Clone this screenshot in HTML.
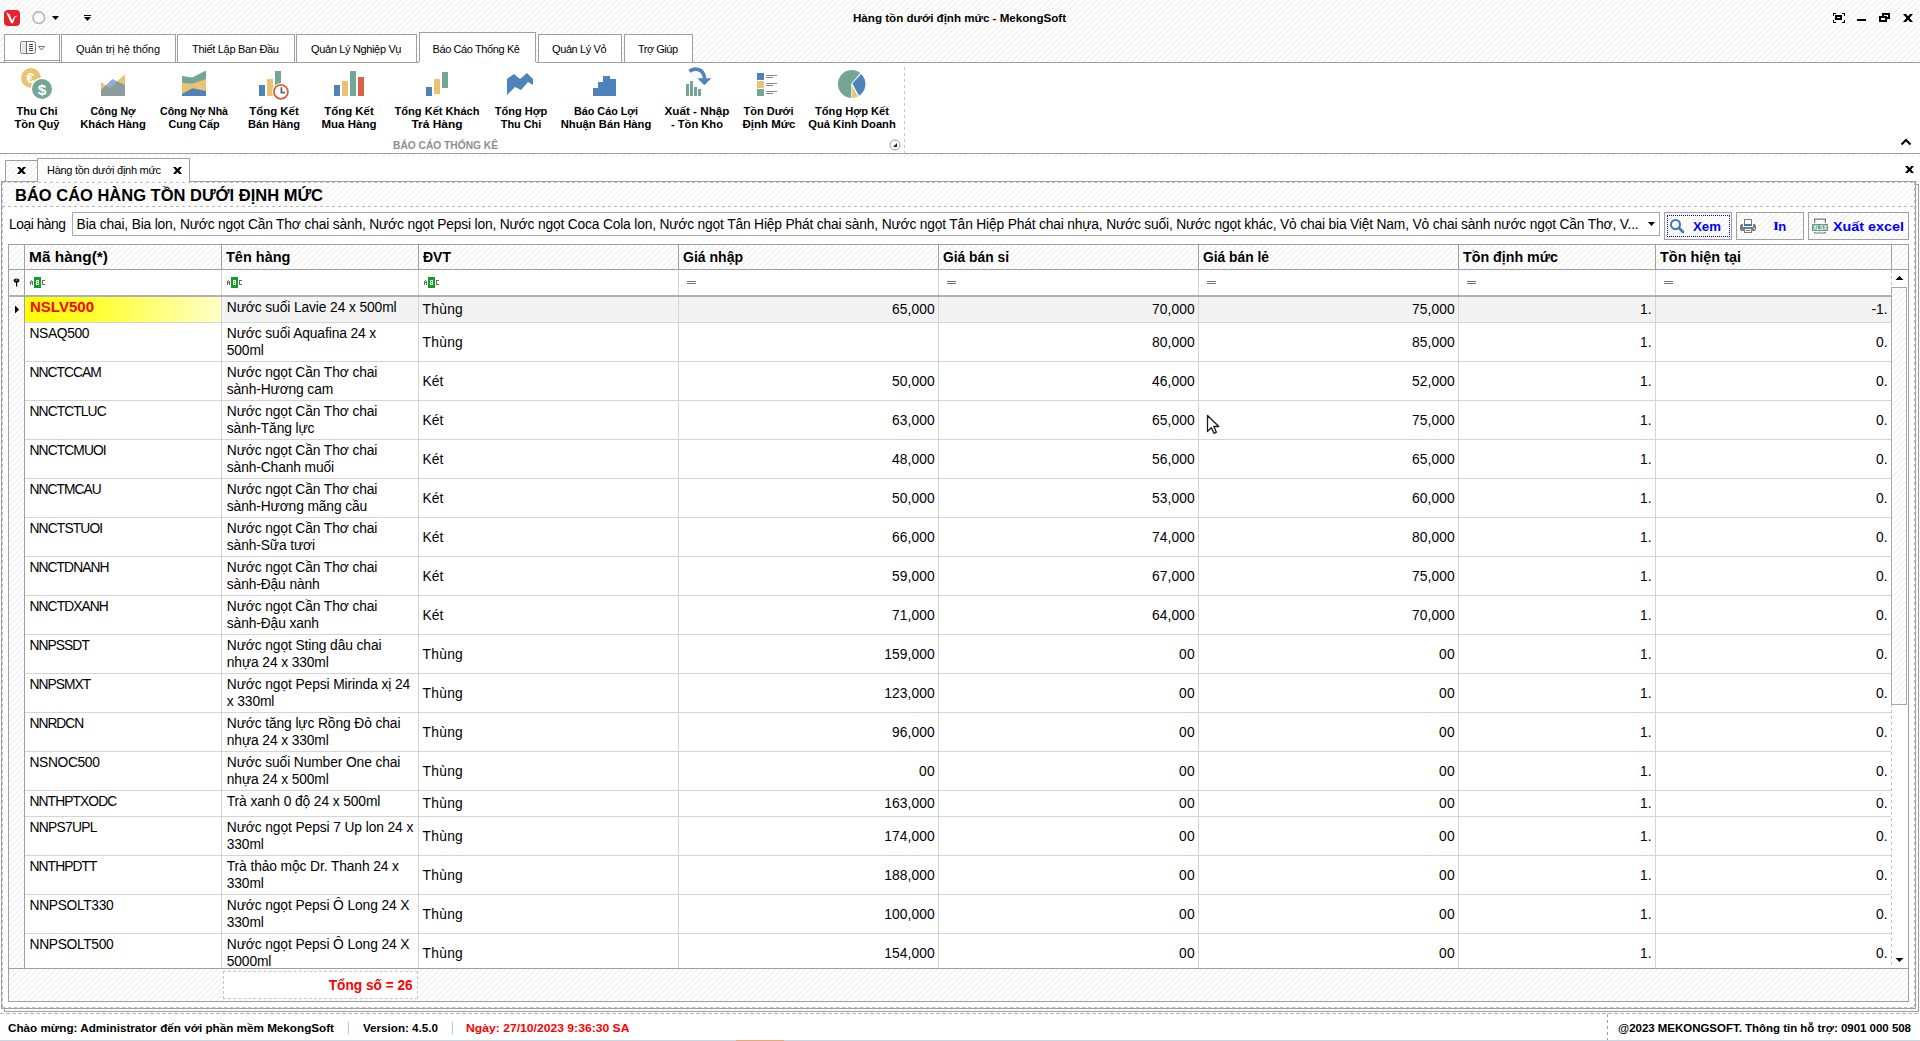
<!DOCTYPE html>
<html><head><meta charset="utf-8"><title>MekongSoft</title>
<style>
html,body{margin:0;padding:0;width:1920px;height:1041px;overflow:hidden;background:#fff;font-family:'Liberation Sans', sans-serif;}
#root{position:relative;width:1920px;height:1041px;overflow:hidden;}
</style></head><body><div id="root">
<svg width="1920" height="1041" style="position:absolute;left:0;top:0" shape-rendering="crispEdges"><defs><pattern id="hp" x="-1" y="0" width="6" height="6" patternUnits="userSpaceOnUse"><rect x="0" y="5" width="1" height="1" fill="#e9e9e9"/><rect x="1" y="4" width="1" height="1" fill="#e9e9e9"/><rect x="2" y="3" width="1" height="1" fill="#e9e9e9"/><rect x="3" y="2" width="1" height="1" fill="#e9e9e9"/><rect x="4" y="1" width="1" height="1" fill="#e9e9e9"/><rect x="5" y="0" width="1" height="1" fill="#e9e9e9"/></pattern><pattern id="hp2" x="-1" y="0" width="6" height="6" patternUnits="userSpaceOnUse"><rect x="0" y="5" width="1" height="1" fill="#f0f0f0"/><rect x="1" y="4" width="1" height="1" fill="#f0f0f0"/><rect x="2" y="3" width="1" height="1" fill="#f0f0f0"/><rect x="3" y="2" width="1" height="1" fill="#f0f0f0"/><rect x="4" y="1" width="1" height="1" fill="#f0f0f0"/><rect x="5" y="0" width="1" height="1" fill="#f0f0f0"/></pattern></defs><rect width="1920" height="1041" fill="url(#hp)"/></svg>
<svg style="position:absolute;left:4px;top:10px" width="16" height="16" viewBox="0 0 16 16"><rect x="0" y="0" width="16" height="16" rx="4" fill="#e8202a"/><path d="M2.2 2.3 L3.8 2.9 L4.2 3.9 L5.2 3.6 L8.2 10.4 L10.2 6.6 L13.6 5.6 L12.4 6.7 L11.3 7.1 L8.9 13.2 L7.1 13.2 Z" fill="#fff"/></svg>
<svg style="position:absolute;left:31px;top:10px" width="16" height="16"><circle cx="7.8" cy="7.7" r="5.8" fill="none" stroke="#b4b4b4" stroke-width="1.6"/></svg>
<svg style="position:absolute;left:51px;top:15px" width="10" height="6"><path d="M1 1 L8 1 L4.5 5 Z" fill="#000"/></svg>
<svg style="position:absolute;left:83px;top:14px" width="10" height="8"><rect x="1" y="1" width="7" height="1" fill="#000"/><path d="M1 3 L8 3 L4.5 7 Z" fill="#000"/></svg>
<span id="t1" style="position:absolute;left:852.5px;transform-origin:0 0;transform:scaleX(1.0535);top:11.19px;font:bold 11px/14px 'Liberation Sans', sans-serif;color:#000;white-space:nowrap;">Hàng tồn dưới định mức - MekongSoft</span>
<svg style="position:absolute;left:1833px;top:13px" width="12" height="10" shape-rendering="crispEdges"><g fill="#000"><rect x="0" y="0" width="3" height="1"/><rect x="0" y="0" width="1" height="3"/><rect x="9" y="0" width="3" height="1"/><rect x="11" y="0" width="1" height="3"/><rect x="0" y="9" width="3" height="1"/><rect x="0" y="7" width="1" height="3"/><rect x="9" y="9" width="3" height="1"/><rect x="11" y="7" width="1" height="3"/></g><path d="M2 2H9V7H2Z M4 4V5H7V4Z" fill="#000" fill-rule="evenodd"/></svg>
<div style="position:absolute;left:1857px;top:19px;width:9px;height:2px;background:#000"></div>
<svg style="position:absolute;left:1879px;top:13px" width="12" height="10" shape-rendering="crispEdges"><path d="M3 0H11V6H3Z M5 2V4H9V2Z" fill="#000" fill-rule="evenodd"/><rect x="0" y="3" width="8" height="6" fill="#000"/><rect x="2" y="5" width="4" height="2" fill="#fff"/></svg>
<svg style="position:absolute;left:1903px;top:14px" width="10" height="8"><path d="M0 0H3L5 2.3L7 0H10L6.6 4L10 8H7L5 5.7L3 8H0L3.4 4Z" fill="#000"/></svg>
<div style="position:absolute;left:0px;top:62px;width:419px;height:1px;background:#a0a0a0"></div>
<div style="position:absolute;left:535px;top:62px;width:1385px;height:1px;background:#a0a0a0"></div>
<div style="position:absolute;left:4px;top:34px;width:56px;height:28px;background:#fff"></div>
<div style="position:absolute;left:4px;top:34px;width:56px;height:1px;background:#a0a0a0"></div>
<div style="position:absolute;left:4px;top:34px;width:1px;height:28px;background:#a0a0a0"></div>
<div style="position:absolute;left:59px;top:34px;width:1px;height:28px;background:#a0a0a0"></div>
<div style="position:absolute;left:4px;top:60px;width:56px;height:1px;background:#a0a0a0"></div>
<svg style="position:absolute;left:20px;top:41px" width="27" height="14"><rect x="0.5" y="0.5" width="15" height="12" rx="2" fill="#fff" stroke="#777"/><rect x="2" y="2" width="4" height="9" fill="#e6e6e6"/><line x1="6.5" y1="0.5" x2="6.5" y2="12.5" stroke="#666"/><rect x="9" y="3" width="4" height="1" fill="#444"/><rect x="9" y="5" width="4" height="1" fill="#444"/><rect x="9" y="7" width="4" height="1" fill="#444"/><rect x="9" y="9" width="4" height="1" fill="#444"/><path d="M18.5 5.5 L24.5 5.5 L21.5 9 Z" fill="none" stroke="#777"/></svg>
<div style="position:absolute;left:61px;top:34px;width:115px;height:28px;background:#fff"></div>
<div style="position:absolute;left:61px;top:34px;width:115px;height:1px;background:#a0a0a0"></div>
<div style="position:absolute;left:61px;top:34px;width:1px;height:28px;background:#a0a0a0"></div>
<div style="position:absolute;left:175px;top:34px;width:1px;height:28px;background:#a0a0a0"></div>
<span id="t2" style="letter-spacing:-0.063px;position:absolute;left:76px;transform-origin:0 0;top:42.19px;font:normal 11px/14px 'Liberation Sans', sans-serif;color:#000;white-space:nowrap;">Quản trị hệ thống</span>
<div style="position:absolute;left:177px;top:34px;width:118px;height:28px;background:#fff"></div>
<div style="position:absolute;left:177px;top:34px;width:118px;height:1px;background:#a0a0a0"></div>
<div style="position:absolute;left:177px;top:34px;width:1px;height:28px;background:#a0a0a0"></div>
<div style="position:absolute;left:294px;top:34px;width:1px;height:28px;background:#a0a0a0"></div>
<span id="t3" style="letter-spacing:-0.296px;position:absolute;left:192px;transform-origin:0 0;top:42.19px;font:normal 11px/14px 'Liberation Sans', sans-serif;color:#000;white-space:nowrap;">Thiết Lập Ban Đầu</span>
<div style="position:absolute;left:296px;top:34px;width:121px;height:28px;background:#fff"></div>
<div style="position:absolute;left:296px;top:34px;width:121px;height:1px;background:#a0a0a0"></div>
<div style="position:absolute;left:296px;top:34px;width:1px;height:28px;background:#a0a0a0"></div>
<div style="position:absolute;left:416px;top:34px;width:1px;height:28px;background:#a0a0a0"></div>
<span id="t4" style="letter-spacing:-0.345px;position:absolute;left:311px;transform-origin:0 0;top:42.19px;font:normal 11px/14px 'Liberation Sans', sans-serif;color:#000;white-space:nowrap;">Quản Lý Nghiệp Vụ</span>
<div style="position:absolute;left:419px;top:32px;width:117px;height:31px;background:#fff"></div>
<div style="position:absolute;left:419px;top:32px;width:117px;height:1px;background:#a0a0a0"></div>
<div style="position:absolute;left:419px;top:32px;width:1px;height:30px;background:#a0a0a0"></div>
<div style="position:absolute;left:535px;top:32px;width:1px;height:30px;background:#a0a0a0"></div>
<span id="t5" style="letter-spacing:-0.392px;position:absolute;left:432.5px;transform-origin:0 0;top:42.19px;font:normal 11px/14px 'Liberation Sans', sans-serif;color:#000;white-space:nowrap;">Báo Cáo Thống Kê</span>
<div style="position:absolute;left:538px;top:34px;width:84px;height:28px;background:#fff"></div>
<div style="position:absolute;left:538px;top:34px;width:84px;height:1px;background:#a0a0a0"></div>
<div style="position:absolute;left:538px;top:34px;width:1px;height:28px;background:#a0a0a0"></div>
<div style="position:absolute;left:621px;top:34px;width:1px;height:28px;background:#a0a0a0"></div>
<span id="t6" style="letter-spacing:-0.399px;position:absolute;left:552px;transform-origin:0 0;top:42.19px;font:normal 11px/14px 'Liberation Sans', sans-serif;color:#000;white-space:nowrap;">Quản Lý Vỏ</span>
<div style="position:absolute;left:624px;top:34px;width:69px;height:28px;background:#fff"></div>
<div style="position:absolute;left:624px;top:34px;width:69px;height:1px;background:#a0a0a0"></div>
<div style="position:absolute;left:624px;top:34px;width:1px;height:28px;background:#a0a0a0"></div>
<div style="position:absolute;left:692px;top:34px;width:1px;height:28px;background:#a0a0a0"></div>
<span id="t7" style="letter-spacing:-0.498px;position:absolute;left:638px;transform-origin:0 0;top:42.19px;font:normal 11px/14px 'Liberation Sans', sans-serif;color:#000;white-space:nowrap;">Trợ Giúp</span>
<div style="position:absolute;left:0px;top:63px;width:1920px;height:90px;background:#fff"></div>
<div style="position:absolute;left:0px;top:153px;width:1920px;height:1px;background:#a0a0a0"></div>
<div style="position:absolute;left:904px;top:67px;width:1px;height:86px;background:repeating-linear-gradient(180deg,#c8c8c8 0 3px,transparent 3px 6px)"></div>
<svg style="position:absolute;left:1900px;top:138px" width="12" height="8"><path d="M1.5 6.5 L6 2 L10.5 6.5" stroke="#000" stroke-width="2" fill="none"/></svg>
<svg style="position:absolute;left:889px;top:139px" width="12" height="12"><circle cx="6" cy="6" r="5" fill="#fff" stroke="#999"/><path d="M4 8 L8 8 L8 4 Z" fill="#222"/></svg>
<span id="t8" style="position:absolute;left:392.5px;transform-origin:0 0;transform:scaleX(0.9287);top:138.19px;font:bold 11px/14px 'Liberation Sans', sans-serif;color:#8e8e8e;white-space:nowrap;">BÁO CÁO THỐNG KÊ</span>
<svg style="position:absolute;left:18px;top:66px" width="36" height="36"><circle cx="13" cy="12" r="10" fill="#ebc370"/><text x="12.3" y="17" font-family="Liberation Sans" font-weight="bold" font-size="14" fill="#fff" text-anchor="middle">€</text><circle cx="24" cy="23" r="11.2" fill="#fff"/><circle cx="24" cy="23" r="10" fill="#73a696"/><text x="24" y="28.5" font-family="Liberation Sans" font-weight="bold" font-size="15.5" fill="#fff" text-anchor="middle">$</text></svg>
<span id="t9" style="position:absolute;left:36.5px;transform-origin:50% 0;transform:translateX(-50%) scaleX(1.0015);top:103.69px;font:bold 11px/14px 'Liberation Sans', sans-serif;color:#000;white-space:nowrap;">Thu Chi</span>
<span id="t10" style="position:absolute;left:36.5px;transform-origin:50% 0;transform:translateX(-50%) scaleX(1.0088);top:116.69px;font:bold 11px/14px 'Liberation Sans', sans-serif;color:#000;white-space:nowrap;">Tồn Quỹ</span>
<svg style="position:absolute;left:101px;top:74px" width="24" height="22"><path d="M0 8 L4.7 11.5 L16.2 7.3 L24 0 L24 22 L0 22 Z" fill="#ebc370"/><path d="M4.7 11.5 L11.3 5 L16.2 7.3 L16.2 22 L4.7 22 Z" fill="#8fb0d4"/><path d="M0 16 L4.7 11.5 L9 14 L16.2 7.3 L24 11 L24 22 L0 22 Z" fill="#8c9c9c"/></svg>
<span id="t11" style="position:absolute;left:113px;transform-origin:50% 0;transform:translateX(-50%) scaleX(0.9590);top:103.69px;font:bold 11px/14px 'Liberation Sans', sans-serif;color:#000;white-space:nowrap;">Công Nợ</span>
<span id="t12" style="position:absolute;left:113px;transform-origin:50% 0;transform:translateX(-50%) scaleX(1.0220);top:116.69px;font:bold 11px/14px 'Liberation Sans', sans-serif;color:#000;white-space:nowrap;">Khách Hàng</span>
<svg style="position:absolute;left:182px;top:70px" width="24" height="26"><path d="M0 6.1 L10.4 7.4 L24 0.4 L24 26 L0 26 Z" fill="#73a696"/><path d="M0 12.8 L10.4 13.8 L24 8.9 L24 26 L0 26 Z" fill="#ebc370"/><path d="M0 24 L10.4 18.2 L24 21 L24 26 L0 26 Z" fill="#4e83ba"/></svg>
<span id="t13" style="position:absolute;left:194px;transform-origin:50% 0;transform:translateX(-50%) scaleX(0.9609);top:103.69px;font:bold 11px/14px 'Liberation Sans', sans-serif;color:#000;white-space:nowrap;">Công Nợ Nhà</span>
<span id="t14" style="position:absolute;left:194px;transform-origin:50% 0;transform:translateX(-50%) scaleX(0.9817);top:116.69px;font:bold 11px/14px 'Liberation Sans', sans-serif;color:#000;white-space:nowrap;">Cung Cấp</span>
<svg style="position:absolute;left:259px;top:71px" width="32" height="32"><rect x="0" y="14" width="6" height="11" fill="#4e83ba"/><rect x="8" y="8" width="6" height="17" fill="#ebc370"/><rect x="16" y="0" width="6" height="16" fill="#73a696"/><circle cx="21.9" cy="20.8" r="8.8" fill="#fff"/><circle cx="21.9" cy="20.8" r="7" fill="#fff" stroke="#d96244" stroke-width="1.8"/><path d="M22.4 16.3 V21.6 H26" stroke="#666" stroke-width="1.8" fill="none"/></svg>
<span id="t15" style="position:absolute;left:273.5px;transform-origin:50% 0;transform:translateX(-50%) scaleX(1.0383);top:103.69px;font:bold 11px/14px 'Liberation Sans', sans-serif;color:#000;white-space:nowrap;">Tổng Kết</span>
<span id="t16" style="position:absolute;left:273.5px;transform-origin:50% 0;transform:translateX(-50%) scaleX(1.0128);top:116.69px;font:bold 11px/14px 'Liberation Sans', sans-serif;color:#000;white-space:nowrap;">Bán Hàng</span>
<svg style="position:absolute;left:334px;top:71px" width="30" height="25"><rect x="0" y="14" width="6" height="11" fill="#4e83ba"/><rect x="8" y="10" width="6" height="15" fill="#ebc370"/><rect x="16" y="0" width="6" height="25" fill="#73a696"/><rect x="24" y="6" width="6" height="19" fill="#d96244"/></svg>
<span id="t17" style="position:absolute;left:349px;transform-origin:50% 0;transform:translateX(-50%) scaleX(1.0383);top:103.69px;font:bold 11px/14px 'Liberation Sans', sans-serif;color:#000;white-space:nowrap;">Tổng Kết</span>
<span id="t18" style="position:absolute;left:349px;transform-origin:50% 0;transform:translateX(-50%) scaleX(1.0464);top:116.69px;font:bold 11px/14px 'Liberation Sans', sans-serif;color:#000;white-space:nowrap;">Mua Hàng</span>
<svg style="position:absolute;left:426px;top:72px" width="22" height="24"><rect x="0" y="15" width="6" height="9" fill="#4e83ba"/><rect x="8" y="7" width="6" height="15" fill="#ebc370"/><rect x="16" y="0" width="6" height="16" fill="#73a696"/></svg>
<span id="t19" style="position:absolute;left:437px;transform-origin:50% 0;transform:translateX(-50%) scaleX(1.0078);top:103.69px;font:bold 11px/14px 'Liberation Sans', sans-serif;color:#000;white-space:nowrap;">Tổng Kết Khách</span>
<span id="t20" style="position:absolute;left:437px;transform-origin:50% 0;transform:translateX(-50%) scaleX(1.0833);top:116.69px;font:bold 11px/14px 'Liberation Sans', sans-serif;color:#000;white-space:nowrap;">Trả Hàng</span>
<svg style="position:absolute;left:507px;top:73px" width="26" height="22"><path d="M0 6 L7 1 L13 6 L20 0 L26 6 L26 12 L21 9 L14 17 L8 14 L0 22 Z" fill="#4e83ba"/></svg>
<span id="t21" style="position:absolute;left:520.5px;transform-origin:50% 0;transform:translateX(-50%) scaleX(1.0015);top:103.69px;font:bold 11px/14px 'Liberation Sans', sans-serif;color:#000;white-space:nowrap;">Tổng Hợp</span>
<span id="t22" style="position:absolute;left:520.5px;transform-origin:50% 0;transform:translateX(-50%) scaleX(0.9893);top:116.69px;font:bold 11px/14px 'Liberation Sans', sans-serif;color:#000;white-space:nowrap;">Thu Chi</span>
<svg style="position:absolute;left:593px;top:76px" width="23" height="20"><path d="M0 12 H5 V6 H10 V0 H17 V3 H23 V20 H0 Z" fill="#4e83ba"/></svg>
<span id="t23" style="position:absolute;left:605.5px;transform-origin:50% 0;transform:translateX(-50%) scaleX(0.9804);top:103.69px;font:bold 11px/14px 'Liberation Sans', sans-serif;color:#000;white-space:nowrap;">Báo Cáo Lợi</span>
<span id="t24" style="position:absolute;left:605.5px;transform-origin:50% 0;transform:translateX(-50%) scaleX(1.0212);top:116.69px;font:bold 11px/14px 'Liberation Sans', sans-serif;color:#000;white-space:nowrap;">Nhuận Bán Hàng</span>
<svg style="position:absolute;left:686px;top:66px" width="27" height="31"><rect x="0" y="18" width="3" height="12" fill="#73a696"/><rect x="4" y="15" width="3" height="15" fill="#73a696"/><rect x="8" y="21" width="3" height="9" fill="#73a696"/><rect x="12" y="23" width="3" height="7" fill="#73a696"/><path d="M3.5 5.3 C7.5 2 17.5 1.5 18.6 12.5" stroke="#4e83ba" stroke-width="3.6" fill="none"/><path d="M11.4 12.2 L25.3 12.2 L18.4 19.2 Z" fill="#4e83ba"/></svg>
<span id="t25" style="position:absolute;left:696.5px;transform-origin:50% 0;transform:translateX(-50%) scaleX(1.0634);top:103.69px;font:bold 11px/14px 'Liberation Sans', sans-serif;color:#000;white-space:nowrap;">Xuất - Nhập</span>
<span id="t26" style="position:absolute;left:696.5px;transform-origin:50% 0;transform:translateX(-50%) scaleX(1.0131);top:116.69px;font:bold 11px/14px 'Liberation Sans', sans-serif;color:#000;white-space:nowrap;">- Tồn Kho</span>
<svg style="position:absolute;left:757px;top:73px" width="22" height="24"><rect x="0" y="0" width="7" height="7" fill="#4e83ba"/><rect x="0" y="8" width="7" height="7" fill="#ebc370"/><rect x="0" y="16" width="7" height="7" fill="#73a696"/><g fill="#888"><rect x="9" y="2" width="11" height="1"/><rect x="9" y="4" width="7" height="1"/><rect x="9" y="10" width="11" height="1"/><rect x="9" y="12" width="7" height="1"/><rect x="9" y="18" width="11" height="1"/><rect x="9" y="20" width="7" height="1"/></g></svg>
<span id="t27" style="position:absolute;left:768.5px;transform-origin:50% 0;transform:translateX(-50%) scaleX(1.0000);top:103.69px;font:bold 11px/14px 'Liberation Sans', sans-serif;color:#000;white-space:nowrap;">Tồn Dưới</span>
<span id="t28" style="position:absolute;left:768.5px;transform-origin:50% 0;transform:translateX(-50%) scaleX(1.0443);top:116.69px;font:bold 11px/14px 'Liberation Sans', sans-serif;color:#000;white-space:nowrap;">Định Mức</span>
<svg style="position:absolute;left:836px;top:69px" width="32" height="32"><path d="M15.3 14.5 L24.4 3.9 A14 14 0 1 0 15.3 29 Z" fill="#73a696"/><path d="M16.3 14.6 L25.2 5 A14 14 0 0 1 23 26.8 Z" fill="#4e83ba"/><path d="M16.2 17 L16.2 29 A14 14 0 0 0 22 27.5 Z" fill="#ebc370"/></svg>
<span id="t29" style="position:absolute;left:851.5px;transform-origin:50% 0;transform:translateX(-50%) scaleX(1.0109);top:103.69px;font:bold 11px/14px 'Liberation Sans', sans-serif;color:#000;white-space:nowrap;">Tổng Hợp Kết</span>
<span id="t30" style="position:absolute;left:851.5px;transform-origin:50% 0;transform:translateX(-50%) scaleX(1.0154);top:116.69px;font:bold 11px/14px 'Liberation Sans', sans-serif;color:#000;white-space:nowrap;">Quả Kinh Doanh</span>
<div style="position:absolute;left:0px;top:157px;width:1920px;height:24px;background:#fff"></div>
<svg style="position:absolute;left:6px;top:161px" width="31" height="20" shape-rendering="crispEdges"><g transform="translate(-6 -161)"><rect x="6" y="161" width="31" height="20" fill="none"/><rect x="6" y="161" width="31" height="20" fill="url(#hp)"/></g></svg>
<div style="position:absolute;left:5px;top:160px;width:32px;height:1px;background:#a0a0a0"></div>
<div style="position:absolute;left:5px;top:160px;width:1px;height:21px;background:#a0a0a0"></div>
<svg style="position:absolute;left:17px;top:167px" width="9" height="7" viewBox="0 0 9 7" preserveAspectRatio="none"><path d="M0 0H2.8L4.5 2.1L6.2 0H9L6.1 3.5L9 7H6.2L4.5 4.9L2.8 7H0L2.9 3.5Z" fill="#000"/></svg>
<div style="position:absolute;left:37px;top:158px;width:153px;height:1px;background:#a0a0a0"></div>
<div style="position:absolute;left:37px;top:158px;width:1px;height:24px;background:#a0a0a0"></div>
<div style="position:absolute;left:189px;top:158px;width:1px;height:24px;background:#a0a0a0"></div>
<span id="t31" style="letter-spacing:-0.275px;position:absolute;left:47px;transform-origin:0 0;top:163.19px;font:normal 11px/14px 'Liberation Sans', sans-serif;color:#000;white-space:nowrap;">Hàng tồn dưới định mức</span>
<svg style="position:absolute;left:173px;top:167px" width="9" height="7" viewBox="0 0 9 7" preserveAspectRatio="none"><path d="M0 0H2.8L4.5 2.1L6.2 0H9L6.1 3.5L9 7H6.2L4.5 4.9L2.8 7H0L2.9 3.5Z" fill="#000"/></svg>
<svg style="position:absolute;left:1905px;top:166px" width="9" height="7" viewBox="0 0 9 7" preserveAspectRatio="none"><path d="M0 0H2.8L4.5 2.1L6.2 0H9L6.1 3.5L9 7H6.2L4.5 4.9L2.8 7H0L2.9 3.5Z" fill="#000"/></svg>
<div style="position:absolute;left:1918px;top:184px;width:1px;height:828px;background:#a0a0a0"></div>
<div style="position:absolute;left:4px;top:1011px;width:1915px;height:1px;background:#a0a0a0"></div>
<div style="position:absolute;left:4px;top:1008px;width:1px;height:4px;background:#a0a0a0"></div>
<div style="position:absolute;left:1915px;top:184px;width:4px;height:1px;background:#a0a0a0"></div>
<div style="position:absolute;left:2px;top:181px;width:35px;height:1px;background:#a0a0a0"></div>
<div style="position:absolute;left:189px;top:181px;width:1727px;height:1px;background:#a0a0a0"></div>
<div style="position:absolute;left:1px;top:181px;width:1px;height:828px;background:#a0a0a0"></div>
<div style="position:absolute;left:1915px;top:181px;width:1px;height:828px;background:#a0a0a0"></div>
<div style="position:absolute;left:1px;top:1008px;width:1915px;height:1px;background:#a0a0a0"></div>
<div style="position:absolute;left:2px;top:182px;width:1px;height:826px;background:repeating-linear-gradient(180deg,#c0c0c0 0 3px,transparent 3px 6px)"></div>
<div style="position:absolute;left:1914px;top:182px;width:1px;height:826px;background:repeating-linear-gradient(180deg,#c0c0c0 0 3px,transparent 3px 6px)"></div>
<div style="position:absolute;left:2px;top:182px;width:1912px;height:1px;background:repeating-linear-gradient(90deg,#c0c0c0 0 3px,transparent 3px 6px)"></div>
<div style="position:absolute;left:2px;top:1007px;width:1912px;height:1px;background:repeating-linear-gradient(90deg,#c0c0c0 0 3px,transparent 3px 6px)"></div>
<div style="position:absolute;left:3px;top:207px;width:1911px;height:800px;background:#fff"></div>
<svg style="position:absolute;left:3px;top:183px" width="1911" height="23" shape-rendering="crispEdges"><g transform="translate(-3 -183)"><rect x="3" y="183" width="1911" height="23" fill="#fff"/><rect x="3" y="183" width="1911" height="23" fill="url(#hp2)"/></g></svg>
<div style="position:absolute;left:2px;top:206px;width:1912px;height:1px;background:repeating-linear-gradient(90deg,#b8b8b8 0 3px,transparent 3px 6px)"></div>
<span id="t32" style="position:absolute;left:14.6px;transform-origin:0 0;transform:scaleX(1.0306);top:185.86px;font:bold 16px/20px 'Liberation Sans', sans-serif;color:#000;white-space:nowrap;">BÁO CÁO HÀNG TỒN DƯỚI ĐỊNH MỨC</span>
<span id="t33" style="letter-spacing:-0.453px;position:absolute;left:9px;transform-origin:0 0;top:216.32px;font:normal 13.8px/17px 'Liberation Sans', sans-serif;color:#000;white-space:nowrap;">Loại hàng</span>
<div style="position:absolute;left:72px;top:212px;width:1588px;height:24px;background:#fff;border:1px solid #a8a8a8;box-sizing:border-box"></div>
<span id="t34" style="letter-spacing:-0.171px;position:absolute;left:76.6px;transform-origin:0 0;top:216.32px;font:normal 13.8px/17px 'Liberation Sans', sans-serif;color:#000;white-space:nowrap;">Bia chai, Bia lon, Nước ngọt Cần Thơ chai sành, Nước ngọt Pepsi lon, Nước ngọt Coca Cola lon, Nước ngọt Tân Hiệp Phát chai sành, Nước ngọt Tân Hiệp Phát chai nhựa, Nước suối, Nước ngọt khác, Vỏ chai bia Việt Nam, Vỏ chai sành nước ngọt Cần Thơ, V...</span>
<svg style="position:absolute;left:1647px;top:221px" width="10" height="6"><path d="M1 1 L8 1 L4.5 5 Z" fill="#000"/></svg>
<div style="position:absolute;left:1664px;top:212px;width:68px;height:28px;background:transparent"></div>
<div style="position:absolute;left:1664px;top:212px;width:68px;height:1px;background:#a0a0a0"></div>
<div style="position:absolute;left:1664px;top:239px;width:68px;height:1px;background:#a0a0a0"></div>
<div style="position:absolute;left:1664px;top:212px;width:1px;height:28px;background:#a0a0a0"></div>
<div style="position:absolute;left:1731px;top:212px;width:1px;height:28px;background:#a0a0a0"></div>
<div style="position:absolute;left:1736px;top:212px;width:68px;height:28px;background:transparent"></div>
<div style="position:absolute;left:1736px;top:212px;width:68px;height:1px;background:#a0a0a0"></div>
<div style="position:absolute;left:1736px;top:239px;width:68px;height:1px;background:#a0a0a0"></div>
<div style="position:absolute;left:1736px;top:212px;width:1px;height:28px;background:#a0a0a0"></div>
<div style="position:absolute;left:1803px;top:212px;width:1px;height:28px;background:#a0a0a0"></div>
<div style="position:absolute;left:1808px;top:212px;width:101px;height:28px;background:transparent"></div>
<div style="position:absolute;left:1808px;top:212px;width:101px;height:1px;background:#a0a0a0"></div>
<div style="position:absolute;left:1808px;top:239px;width:101px;height:1px;background:#a0a0a0"></div>
<div style="position:absolute;left:1808px;top:212px;width:1px;height:28px;background:#a0a0a0"></div>
<div style="position:absolute;left:1908px;top:212px;width:1px;height:28px;background:#a0a0a0"></div>
<svg style="position:absolute;left:1665px;top:213px" width="66" height="26" shape-rendering="crispEdges"><g transform="translate(-1665 -213)"><rect x="1665" y="213" width="66" height="26" fill="none"/><rect x="1665" y="213" width="66" height="26" fill="url(#hp)"/></g></svg>
<svg style="position:absolute;left:1737px;top:213px" width="66" height="26" shape-rendering="crispEdges"><g transform="translate(-1737 -213)"><rect x="1737" y="213" width="66" height="26" fill="none"/><rect x="1737" y="213" width="66" height="26" fill="url(#hp)"/></g></svg>
<svg style="position:absolute;left:1809px;top:213px" width="99" height="26" shape-rendering="crispEdges"><g transform="translate(-1809 -213)"><rect x="1809" y="213" width="99" height="26" fill="none"/><rect x="1809" y="213" width="99" height="26" fill="url(#hp)"/></g></svg>
<div style="position:absolute;left:1667px;top:215px;width:63px;height:22px;border:1px dotted #0000ff;box-sizing:border-box"></div>
<svg style="position:absolute;left:1669px;top:218px" width="16" height="16"><circle cx="6.5" cy="6.5" r="4.5" fill="none" stroke="#3c78b4" stroke-width="2"/><path d="M10 10 L14 14" stroke="#3c78b4" stroke-width="2.6" stroke-linecap="round"/></svg>
<span id="t35" style="position:absolute;left:1693px;transform-origin:0 0;transform:scaleX(1.0193);top:218.50px;font:bold 13px/16px 'Liberation Sans', sans-serif;color:#0000ff;white-space:nowrap;">Xem</span>
<svg style="position:absolute;left:1740px;top:219px" width="16" height="14"><path d="M2 5 H14 A2 2 0 0 1 16 7 V10 A2 2 0 0 1 14 12 H2 A2 2 0 0 1 0 10 V7 A2 2 0 0 1 2 5Z" fill="#7a7a7a"/><rect x="3" y="5" width="10" height="3" fill="#fff"/><rect x="4.5" y="0.5" width="7" height="6" fill="#fff" stroke="#7a7a7a"/><rect x="4" y="5" width="8" height="2" fill="#3c78b4"/><rect x="4.5" y="9.5" width="7" height="4" fill="#fff" stroke="#7a7a7a"/><rect x="6" y="11" width="4" height="1" fill="#3c78b4"/><rect x="13.5" y="9" width="1.5" height="1.2" fill="#fff"/></svg>
<span id="t36" style="position:absolute;left:1778.3px;transform-origin:0 0;top:218.50px;font:bold 13px/16px 'Liberation Sans', sans-serif;color:#0000ff;white-space:nowrap;">n</span>
<span style="position:absolute;left:1773px;top:218.2px;font:bold 13.3px/16px 'Liberation Serif', serif;color:#0000ff;transform:scaleX(1.15);transform-origin:0 0">I</span>
<svg style="position:absolute;left:1812px;top:218px" width="16" height="16"><path d="M2.6 5 V1.1 H13.4 V5 M2.6 14 V15 H13.4 V14" stroke="#777" stroke-width="1.2" fill="none"/><rect x="0" y="6" width="16" height="7" fill="#5f9e86"/><text x="8" y="12" font-family="Liberation Sans" font-size="7" fill="#fff" text-anchor="middle" font-weight="bold" textLength="14" lengthAdjust="spacingAndGlyphs">XLSX</text></svg>
<span id="t37" style="position:absolute;left:1832.5px;transform-origin:0 0;transform:scaleX(1.1037);top:218.50px;font:bold 13px/16px 'Liberation Sans', sans-serif;color:#0000ff;white-space:nowrap;">Xuất excel</span>
<svg style="position:absolute;left:9px;top:245px" width="1899" height="24" shape-rendering="crispEdges"><g transform="translate(-9 -245)"><rect x="9" y="245" width="1899" height="24" fill="none"/><rect x="9" y="245" width="1899" height="24" fill="url(#hp)"/></g></svg>
<svg style="position:absolute;left:9px;top:270px" width="15" height="699" shape-rendering="crispEdges"><g transform="translate(-9 -270)"><rect x="9" y="270" width="15" height="699" fill="none"/><rect x="9" y="270" width="15" height="699" fill="url(#hp)"/></g></svg>
<svg style="position:absolute;left:9px;top:969px" width="1899" height="32" shape-rendering="crispEdges"><g transform="translate(-9 -969)"><rect x="9" y="969" width="1899" height="32" fill="none"/><rect x="9" y="969" width="1899" height="32" fill="url(#hp)"/></g></svg>
<div style="position:absolute;left:8px;top:244px;width:1901px;height:1px;background:#a0a0a0"></div>
<div style="position:absolute;left:8px;top:244px;width:1px;height:758px;background:#a0a0a0"></div>
<div style="position:absolute;left:1908px;top:244px;width:1px;height:758px;background:#a0a0a0"></div>
<div style="position:absolute;left:8px;top:1001px;width:1901px;height:1px;background:#a0a0a0"></div>
<div style="position:absolute;left:8px;top:269px;width:1900px;height:1px;background:#a0a0a0"></div>
<div style="position:absolute;left:8px;top:295px;width:1883px;height:2px;background:#b0b0b0"></div>
<div style="position:absolute;left:24px;top:244px;width:1px;height:25px;background:#a0a0a0"></div>
<div style="position:absolute;left:221px;top:244px;width:1px;height:25px;background:#a0a0a0"></div>
<div style="position:absolute;left:418px;top:244px;width:1px;height:25px;background:#a0a0a0"></div>
<div style="position:absolute;left:678px;top:244px;width:1px;height:25px;background:#a0a0a0"></div>
<div style="position:absolute;left:938px;top:244px;width:1px;height:25px;background:#a0a0a0"></div>
<div style="position:absolute;left:1198px;top:244px;width:1px;height:25px;background:#a0a0a0"></div>
<div style="position:absolute;left:1458px;top:244px;width:1px;height:25px;background:#a0a0a0"></div>
<div style="position:absolute;left:1655px;top:244px;width:1px;height:25px;background:#a0a0a0"></div>
<div style="position:absolute;left:1891px;top:244px;width:1px;height:25px;background:#a0a0a0"></div>
<div style="position:absolute;left:24px;top:270px;width:1px;height:25px;background:#a0a0a0"></div>
<div style="position:absolute;left:221px;top:270px;width:1px;height:25px;background:#d4d4d4"></div>
<div style="position:absolute;left:418px;top:270px;width:1px;height:25px;background:#d4d4d4"></div>
<div style="position:absolute;left:678px;top:270px;width:1px;height:25px;background:#d4d4d4"></div>
<div style="position:absolute;left:938px;top:270px;width:1px;height:25px;background:#d4d4d4"></div>
<div style="position:absolute;left:1198px;top:270px;width:1px;height:25px;background:#d4d4d4"></div>
<div style="position:absolute;left:1458px;top:270px;width:1px;height:25px;background:#d4d4d4"></div>
<div style="position:absolute;left:1655px;top:270px;width:1px;height:25px;background:#d4d4d4"></div>
<div style="position:absolute;left:1891px;top:270px;width:1px;height:25px;background:repeating-linear-gradient(180deg,#c0c0c0 0 3px,transparent 3px 6px)"></div>
<span id="t38" style="position:absolute;left:29px;transform-origin:0 0;transform:scaleX(1.1203);top:248.72px;font:bold 13.8px/17px 'Liberation Sans', sans-serif;color:#000;white-space:nowrap;">Mã hàng(*)</span>
<span id="t39" style="position:absolute;left:226px;transform-origin:0 0;transform:scaleX(1.0517);top:248.72px;font:bold 13.8px/17px 'Liberation Sans', sans-serif;color:#000;white-space:nowrap;">Tên hàng</span>
<span id="t40" style="position:absolute;left:423px;transform-origin:0 0;transform:scaleX(1.0141);top:248.72px;font:bold 13.8px/17px 'Liberation Sans', sans-serif;color:#000;white-space:nowrap;">ĐVT</span>
<span id="t41" style="position:absolute;left:683px;transform-origin:0 0;transform:scaleX(1.0164);top:248.72px;font:bold 13.8px/17px 'Liberation Sans', sans-serif;color:#000;white-space:nowrap;">Giá nhập</span>
<span id="t42" style="position:absolute;left:943px;transform-origin:0 0;transform:scaleX(1.0007);top:248.72px;font:bold 13.8px/17px 'Liberation Sans', sans-serif;color:#000;white-space:nowrap;">Giá bán sỉ</span>
<span id="t43" style="position:absolute;left:1203px;transform-origin:0 0;transform:scaleX(1.0007);top:248.72px;font:bold 13.8px/17px 'Liberation Sans', sans-serif;color:#000;white-space:nowrap;">Giá bán lẻ</span>
<span id="t44" style="position:absolute;left:1463px;transform-origin:0 0;transform:scaleX(1.0326);top:248.72px;font:bold 13.8px/17px 'Liberation Sans', sans-serif;color:#000;white-space:nowrap;">Tồn định mức</span>
<span id="t45" style="position:absolute;left:1660px;transform-origin:0 0;transform:scaleX(1.0462);top:248.72px;font:bold 13.8px/17px 'Liberation Sans', sans-serif;color:#000;white-space:nowrap;">Tồn hiện tại</span>
<svg style="position:absolute;left:13px;top:278px" width="7" height="9"><ellipse cx="3.5" cy="2.5" rx="2.8" ry="2" fill="#000"/><ellipse cx="3.5" cy="2" rx="1.2" ry="0.6" fill="#fff"/><rect x="3" y="4" width="1.2" height="4.5" fill="#000"/></svg>
<svg style="position:absolute;left:30px;top:277px" width="16" height="12" shape-rendering="crispEdges"><g fill="#6a6a6a"><rect x="1" y="3" width="1" height="1"/><rect x="0" y="4" width="1" height="4"/><rect x="2" y="4" width="1" height="4"/><rect x="1" y="5" width="1" height="1"/><rect x="12" y="3" width="3" height="1"/><rect x="12" y="4" width="1" height="3"/><rect x="12" y="7" width="3" height="1"/></g><rect x="4" y="0" width="7" height="11" fill="#10a020"/><rect x="6" y="3" width="3" height="5" fill="#fff"/><rect x="7" y="4" width="1" height="1" fill="#10a020"/><rect x="7" y="6" width="1" height="1" fill="#10a020"/></svg>
<svg style="position:absolute;left:227px;top:277px" width="16" height="12" shape-rendering="crispEdges"><g fill="#6a6a6a"><rect x="1" y="3" width="1" height="1"/><rect x="0" y="4" width="1" height="4"/><rect x="2" y="4" width="1" height="4"/><rect x="1" y="5" width="1" height="1"/><rect x="12" y="3" width="3" height="1"/><rect x="12" y="4" width="1" height="3"/><rect x="12" y="7" width="3" height="1"/></g><rect x="4" y="0" width="7" height="11" fill="#10a020"/><rect x="6" y="3" width="3" height="5" fill="#fff"/><rect x="7" y="4" width="1" height="1" fill="#10a020"/><rect x="7" y="6" width="1" height="1" fill="#10a020"/></svg>
<svg style="position:absolute;left:424px;top:277px" width="16" height="12" shape-rendering="crispEdges"><g fill="#6a6a6a"><rect x="1" y="3" width="1" height="1"/><rect x="0" y="4" width="1" height="4"/><rect x="2" y="4" width="1" height="4"/><rect x="1" y="5" width="1" height="1"/><rect x="12" y="3" width="3" height="1"/><rect x="12" y="4" width="1" height="3"/><rect x="12" y="7" width="3" height="1"/></g><rect x="4" y="0" width="7" height="11" fill="#10a020"/><rect x="6" y="3" width="3" height="5" fill="#fff"/><rect x="7" y="4" width="1" height="1" fill="#10a020"/><rect x="7" y="6" width="1" height="1" fill="#10a020"/></svg>
<div style="position:absolute;left:687px;top:281px;width:9px;height:1px;background:#707070"></div>
<div style="position:absolute;left:687px;top:283px;width:9px;height:1px;background:#707070"></div>
<div style="position:absolute;left:947px;top:281px;width:9px;height:1px;background:#707070"></div>
<div style="position:absolute;left:947px;top:283px;width:9px;height:1px;background:#707070"></div>
<div style="position:absolute;left:1207px;top:281px;width:9px;height:1px;background:#707070"></div>
<div style="position:absolute;left:1207px;top:283px;width:9px;height:1px;background:#707070"></div>
<div style="position:absolute;left:1467px;top:281px;width:9px;height:1px;background:#707070"></div>
<div style="position:absolute;left:1467px;top:283px;width:9px;height:1px;background:#707070"></div>
<div style="position:absolute;left:1664px;top:281px;width:9px;height:1px;background:#707070"></div>
<div style="position:absolute;left:1664px;top:283px;width:9px;height:1px;background:#707070"></div>
<svg style="position:absolute;left:1895px;top:275px" width="9" height="6"><path d="M0.5 5 L4.5 1 L8.5 5 Z" fill="#000"/></svg>
<div style="position:absolute;left:25px;top:297px;width:1866px;height:25px;background:#f3f3f3"></div>
<div style="position:absolute;left:25px;top:297px;width:196px;height:25px;background:linear-gradient(90deg,#ffff00 0%,#ffff30 35%,#ffffc8 100%)"></div>
<span id="t46" style="position:absolute;left:29.8px;transform-origin:0 0;transform:scaleX(1.0885);top:298.72px;font:bold 13.8px/17px 'Liberation Sans', sans-serif;color:#ff0000;white-space:nowrap;">NSLV500</span>
<span id="t47" style="letter-spacing:-0.103px;position:absolute;left:226.8px;transform-origin:0 0;top:298.72px;font:normal 13.8px/17px 'Liberation Sans', sans-serif;color:#000;white-space:nowrap;">Nước suối Lavie 24 x 500ml</span>
<span id="t48" style="letter-spacing:0.293px;position:absolute;left:422.5px;transform-origin:0 0;top:300.72px;font:normal 13.8px/17px 'Liberation Sans', sans-serif;color:#000;white-space:nowrap;">Thùng</span>
<span id="t49" style="letter-spacing:0.068px;position:absolute;right:985.3px;transform-origin:100% 0;top:300.72px;font:normal 13.8px/17px 'Liberation Sans', sans-serif;color:#000;white-space:nowrap;">65,000</span>
<span id="t50" style="letter-spacing:0.068px;position:absolute;right:725.3px;transform-origin:100% 0;top:300.72px;font:normal 13.8px/17px 'Liberation Sans', sans-serif;color:#000;white-space:nowrap;">70,000</span>
<span id="t51" style="letter-spacing:0.068px;position:absolute;right:465.29999999999995px;transform-origin:100% 0;top:300.72px;font:normal 13.8px/17px 'Liberation Sans', sans-serif;color:#000;white-space:nowrap;">75,000</span>
<span id="t52" style="letter-spacing:0.092px;position:absolute;right:268.29999999999995px;transform-origin:100% 0;top:300.72px;font:normal 13.8px/17px 'Liberation Sans', sans-serif;color:#000;white-space:nowrap;">1.</span>
<span id="t53" style="letter-spacing:0.064px;position:absolute;right:32.299999999999955px;transform-origin:100% 0;top:300.72px;font:normal 13.8px/17px 'Liberation Sans', sans-serif;color:#000;white-space:nowrap;">-1.</span>
<div style="position:absolute;left:25px;top:322px;width:1866px;height:1px;background:#d4d4d4"></div>
<span id="t54" style="letter-spacing:-0.352px;position:absolute;left:29.5px;transform-origin:0 0;top:324.72px;font:normal 13.8px/17px 'Liberation Sans', sans-serif;color:#000;white-space:nowrap;">NSAQ500</span>
<span id="t55" style="letter-spacing:-0.103px;position:absolute;left:226.8px;transform-origin:0 0;top:324.72px;font:normal 13.8px/17px 'Liberation Sans', sans-serif;color:#000;white-space:nowrap;">Nước suối Aquafina 24 x</span>
<span id="t56" style="letter-spacing:-0.141px;position:absolute;left:226.8px;transform-origin:0 0;top:341.72px;font:normal 13.8px/17px 'Liberation Sans', sans-serif;color:#000;white-space:nowrap;">500ml</span>
<span id="t57" style="letter-spacing:0.293px;position:absolute;left:422.5px;transform-origin:0 0;top:333.72px;font:normal 13.8px/17px 'Liberation Sans', sans-serif;color:#000;white-space:nowrap;">Thùng</span>
<span id="t58" style="letter-spacing:0.068px;position:absolute;right:725.3px;transform-origin:100% 0;top:333.72px;font:normal 13.8px/17px 'Liberation Sans', sans-serif;color:#000;white-space:nowrap;">80,000</span>
<span id="t59" style="letter-spacing:0.068px;position:absolute;right:465.29999999999995px;transform-origin:100% 0;top:333.72px;font:normal 13.8px/17px 'Liberation Sans', sans-serif;color:#000;white-space:nowrap;">85,000</span>
<span id="t60" style="letter-spacing:0.092px;position:absolute;right:268.29999999999995px;transform-origin:100% 0;top:333.72px;font:normal 13.8px/17px 'Liberation Sans', sans-serif;color:#000;white-space:nowrap;">1.</span>
<span id="t61" style="letter-spacing:0.092px;position:absolute;right:32.299999999999955px;transform-origin:100% 0;top:333.72px;font:normal 13.8px/17px 'Liberation Sans', sans-serif;color:#000;white-space:nowrap;">0.</span>
<div style="position:absolute;left:25px;top:361px;width:1866px;height:1px;background:#d4d4d4"></div>
<span id="t62" style="letter-spacing:-0.959px;position:absolute;left:29.5px;transform-origin:0 0;top:363.72px;font:normal 13.8px/17px 'Liberation Sans', sans-serif;color:#000;white-space:nowrap;">NNCTCCAM</span>
<span id="t63" style="letter-spacing:-0.109px;position:absolute;left:226.8px;transform-origin:0 0;top:363.72px;font:normal 13.8px/17px 'Liberation Sans', sans-serif;color:#000;white-space:nowrap;">Nước ngọt Cần Thơ chai</span>
<span id="t64" style="letter-spacing:-0.125px;position:absolute;left:226.8px;transform-origin:0 0;top:380.72px;font:normal 13.8px/17px 'Liberation Sans', sans-serif;color:#000;white-space:nowrap;">sành-Hương cam</span>
<span id="t65" style="letter-spacing:0.000px;position:absolute;left:422.5px;transform-origin:0 0;top:372.72px;font:normal 13.8px/17px 'Liberation Sans', sans-serif;color:#000;white-space:nowrap;">Két</span>
<span id="t66" style="letter-spacing:0.068px;position:absolute;right:985.3px;transform-origin:100% 0;top:372.72px;font:normal 13.8px/17px 'Liberation Sans', sans-serif;color:#000;white-space:nowrap;">50,000</span>
<span id="t67" style="letter-spacing:0.068px;position:absolute;right:725.3px;transform-origin:100% 0;top:372.72px;font:normal 13.8px/17px 'Liberation Sans', sans-serif;color:#000;white-space:nowrap;">46,000</span>
<span id="t68" style="letter-spacing:0.068px;position:absolute;right:465.29999999999995px;transform-origin:100% 0;top:372.72px;font:normal 13.8px/17px 'Liberation Sans', sans-serif;color:#000;white-space:nowrap;">52,000</span>
<span id="t69" style="letter-spacing:0.092px;position:absolute;right:268.29999999999995px;transform-origin:100% 0;top:372.72px;font:normal 13.8px/17px 'Liberation Sans', sans-serif;color:#000;white-space:nowrap;">1.</span>
<span id="t70" style="letter-spacing:0.092px;position:absolute;right:32.299999999999955px;transform-origin:100% 0;top:372.72px;font:normal 13.8px/17px 'Liberation Sans', sans-serif;color:#000;white-space:nowrap;">0.</span>
<div style="position:absolute;left:25px;top:400px;width:1866px;height:1px;background:#d4d4d4"></div>
<span id="t71" style="letter-spacing:-0.896px;position:absolute;left:29.5px;transform-origin:0 0;top:402.72px;font:normal 13.8px/17px 'Liberation Sans', sans-serif;color:#000;white-space:nowrap;">NNCTCTLUC</span>
<span id="t72" style="letter-spacing:-0.109px;position:absolute;left:226.8px;transform-origin:0 0;top:402.72px;font:normal 13.8px/17px 'Liberation Sans', sans-serif;color:#000;white-space:nowrap;">Nước ngọt Cần Thơ chai</span>
<span id="t73" style="letter-spacing:-0.111px;position:absolute;left:226.8px;transform-origin:0 0;top:419.72px;font:normal 13.8px/17px 'Liberation Sans', sans-serif;color:#000;white-space:nowrap;">sành-Tăng lực</span>
<span id="t74" style="letter-spacing:0.000px;position:absolute;left:422.5px;transform-origin:0 0;top:411.72px;font:normal 13.8px/17px 'Liberation Sans', sans-serif;color:#000;white-space:nowrap;">Két</span>
<span id="t75" style="letter-spacing:0.068px;position:absolute;right:985.3px;transform-origin:100% 0;top:411.72px;font:normal 13.8px/17px 'Liberation Sans', sans-serif;color:#000;white-space:nowrap;">63,000</span>
<span id="t76" style="letter-spacing:0.068px;position:absolute;right:725.3px;transform-origin:100% 0;top:411.72px;font:normal 13.8px/17px 'Liberation Sans', sans-serif;color:#000;white-space:nowrap;">65,000</span>
<span id="t77" style="letter-spacing:0.068px;position:absolute;right:465.29999999999995px;transform-origin:100% 0;top:411.72px;font:normal 13.8px/17px 'Liberation Sans', sans-serif;color:#000;white-space:nowrap;">75,000</span>
<span id="t78" style="letter-spacing:0.092px;position:absolute;right:268.29999999999995px;transform-origin:100% 0;top:411.72px;font:normal 13.8px/17px 'Liberation Sans', sans-serif;color:#000;white-space:nowrap;">1.</span>
<span id="t79" style="letter-spacing:0.092px;position:absolute;right:32.299999999999955px;transform-origin:100% 0;top:411.72px;font:normal 13.8px/17px 'Liberation Sans', sans-serif;color:#000;white-space:nowrap;">0.</span>
<div style="position:absolute;left:25px;top:439px;width:1866px;height:1px;background:#d4d4d4"></div>
<span id="t80" style="letter-spacing:-0.896px;position:absolute;left:29.5px;transform-origin:0 0;top:441.72px;font:normal 13.8px/17px 'Liberation Sans', sans-serif;color:#000;white-space:nowrap;">NNCTCMUOI</span>
<span id="t81" style="letter-spacing:-0.109px;position:absolute;left:226.8px;transform-origin:0 0;top:441.72px;font:normal 13.8px/17px 'Liberation Sans', sans-serif;color:#000;white-space:nowrap;">Nước ngọt Cần Thơ chai</span>
<span id="t82" style="letter-spacing:-0.117px;position:absolute;left:226.8px;transform-origin:0 0;top:458.72px;font:normal 13.8px/17px 'Liberation Sans', sans-serif;color:#000;white-space:nowrap;">sành-Chanh muối</span>
<span id="t83" style="letter-spacing:0.000px;position:absolute;left:422.5px;transform-origin:0 0;top:450.72px;font:normal 13.8px/17px 'Liberation Sans', sans-serif;color:#000;white-space:nowrap;">Két</span>
<span id="t84" style="letter-spacing:0.068px;position:absolute;right:985.3px;transform-origin:100% 0;top:450.72px;font:normal 13.8px/17px 'Liberation Sans', sans-serif;color:#000;white-space:nowrap;">48,000</span>
<span id="t85" style="letter-spacing:0.068px;position:absolute;right:725.3px;transform-origin:100% 0;top:450.72px;font:normal 13.8px/17px 'Liberation Sans', sans-serif;color:#000;white-space:nowrap;">56,000</span>
<span id="t86" style="letter-spacing:0.068px;position:absolute;right:465.29999999999995px;transform-origin:100% 0;top:450.72px;font:normal 13.8px/17px 'Liberation Sans', sans-serif;color:#000;white-space:nowrap;">65,000</span>
<span id="t87" style="letter-spacing:0.092px;position:absolute;right:268.29999999999995px;transform-origin:100% 0;top:450.72px;font:normal 13.8px/17px 'Liberation Sans', sans-serif;color:#000;white-space:nowrap;">1.</span>
<span id="t88" style="letter-spacing:0.092px;position:absolute;right:32.299999999999955px;transform-origin:100% 0;top:450.72px;font:normal 13.8px/17px 'Liberation Sans', sans-serif;color:#000;white-space:nowrap;">0.</span>
<div style="position:absolute;left:25px;top:478px;width:1866px;height:1px;background:#d4d4d4"></div>
<span id="t89" style="letter-spacing:-0.959px;position:absolute;left:29.5px;transform-origin:0 0;top:480.72px;font:normal 13.8px/17px 'Liberation Sans', sans-serif;color:#000;white-space:nowrap;">NNCTMCAU</span>
<span id="t90" style="letter-spacing:-0.109px;position:absolute;left:226.8px;transform-origin:0 0;top:480.72px;font:normal 13.8px/17px 'Liberation Sans', sans-serif;color:#000;white-space:nowrap;">Nước ngọt Cần Thơ chai</span>
<span id="t91" style="letter-spacing:-0.119px;position:absolute;left:226.8px;transform-origin:0 0;top:497.72px;font:normal 13.8px/17px 'Liberation Sans', sans-serif;color:#000;white-space:nowrap;">sành-Hương mãng cầu</span>
<span id="t92" style="letter-spacing:0.000px;position:absolute;left:422.5px;transform-origin:0 0;top:489.72px;font:normal 13.8px/17px 'Liberation Sans', sans-serif;color:#000;white-space:nowrap;">Két</span>
<span id="t93" style="letter-spacing:0.068px;position:absolute;right:985.3px;transform-origin:100% 0;top:489.72px;font:normal 13.8px/17px 'Liberation Sans', sans-serif;color:#000;white-space:nowrap;">50,000</span>
<span id="t94" style="letter-spacing:0.068px;position:absolute;right:725.3px;transform-origin:100% 0;top:489.72px;font:normal 13.8px/17px 'Liberation Sans', sans-serif;color:#000;white-space:nowrap;">53,000</span>
<span id="t95" style="letter-spacing:0.068px;position:absolute;right:465.29999999999995px;transform-origin:100% 0;top:489.72px;font:normal 13.8px/17px 'Liberation Sans', sans-serif;color:#000;white-space:nowrap;">60,000</span>
<span id="t96" style="letter-spacing:0.092px;position:absolute;right:268.29999999999995px;transform-origin:100% 0;top:489.72px;font:normal 13.8px/17px 'Liberation Sans', sans-serif;color:#000;white-space:nowrap;">1.</span>
<span id="t97" style="letter-spacing:0.092px;position:absolute;right:32.299999999999955px;transform-origin:100% 0;top:489.72px;font:normal 13.8px/17px 'Liberation Sans', sans-serif;color:#000;white-space:nowrap;">0.</span>
<div style="position:absolute;left:25px;top:517px;width:1866px;height:1px;background:#d4d4d4"></div>
<span id="t98" style="letter-spacing:-0.855px;position:absolute;left:29.5px;transform-origin:0 0;top:519.72px;font:normal 13.8px/17px 'Liberation Sans', sans-serif;color:#000;white-space:nowrap;">NNCTSTUOI</span>
<span id="t99" style="letter-spacing:-0.109px;position:absolute;left:226.8px;transform-origin:0 0;top:519.72px;font:normal 13.8px/17px 'Liberation Sans', sans-serif;color:#000;white-space:nowrap;">Nước ngọt Cần Thơ chai</span>
<span id="t100" style="letter-spacing:-0.112px;position:absolute;left:226.8px;transform-origin:0 0;top:536.72px;font:normal 13.8px/17px 'Liberation Sans', sans-serif;color:#000;white-space:nowrap;">sành-Sữa tươi</span>
<span id="t101" style="letter-spacing:0.000px;position:absolute;left:422.5px;transform-origin:0 0;top:528.72px;font:normal 13.8px/17px 'Liberation Sans', sans-serif;color:#000;white-space:nowrap;">Két</span>
<span id="t102" style="letter-spacing:0.068px;position:absolute;right:985.3px;transform-origin:100% 0;top:528.72px;font:normal 13.8px/17px 'Liberation Sans', sans-serif;color:#000;white-space:nowrap;">66,000</span>
<span id="t103" style="letter-spacing:0.068px;position:absolute;right:725.3px;transform-origin:100% 0;top:528.72px;font:normal 13.8px/17px 'Liberation Sans', sans-serif;color:#000;white-space:nowrap;">74,000</span>
<span id="t104" style="letter-spacing:0.068px;position:absolute;right:465.29999999999995px;transform-origin:100% 0;top:528.72px;font:normal 13.8px/17px 'Liberation Sans', sans-serif;color:#000;white-space:nowrap;">80,000</span>
<span id="t105" style="letter-spacing:0.092px;position:absolute;right:268.29999999999995px;transform-origin:100% 0;top:528.72px;font:normal 13.8px/17px 'Liberation Sans', sans-serif;color:#000;white-space:nowrap;">1.</span>
<span id="t106" style="letter-spacing:0.092px;position:absolute;right:32.299999999999955px;transform-origin:100% 0;top:528.72px;font:normal 13.8px/17px 'Liberation Sans', sans-serif;color:#000;white-space:nowrap;">0.</span>
<div style="position:absolute;left:25px;top:556px;width:1866px;height:1px;background:#d4d4d4"></div>
<span id="t107" style="letter-spacing:-0.929px;position:absolute;left:29.5px;transform-origin:0 0;top:558.72px;font:normal 13.8px/17px 'Liberation Sans', sans-serif;color:#000;white-space:nowrap;">NNCTDNANH</span>
<span id="t108" style="letter-spacing:-0.109px;position:absolute;left:226.8px;transform-origin:0 0;top:558.72px;font:normal 13.8px/17px 'Liberation Sans', sans-serif;color:#000;white-space:nowrap;">Nước ngọt Cần Thơ chai</span>
<span id="t109" style="letter-spacing:-0.118px;position:absolute;left:226.8px;transform-origin:0 0;top:575.72px;font:normal 13.8px/17px 'Liberation Sans', sans-serif;color:#000;white-space:nowrap;">sành-Đậu nành</span>
<span id="t110" style="letter-spacing:0.000px;position:absolute;left:422.5px;transform-origin:0 0;top:567.72px;font:normal 13.8px/17px 'Liberation Sans', sans-serif;color:#000;white-space:nowrap;">Két</span>
<span id="t111" style="letter-spacing:0.068px;position:absolute;right:985.3px;transform-origin:100% 0;top:567.72px;font:normal 13.8px/17px 'Liberation Sans', sans-serif;color:#000;white-space:nowrap;">59,000</span>
<span id="t112" style="letter-spacing:0.068px;position:absolute;right:725.3px;transform-origin:100% 0;top:567.72px;font:normal 13.8px/17px 'Liberation Sans', sans-serif;color:#000;white-space:nowrap;">67,000</span>
<span id="t113" style="letter-spacing:0.068px;position:absolute;right:465.29999999999995px;transform-origin:100% 0;top:567.72px;font:normal 13.8px/17px 'Liberation Sans', sans-serif;color:#000;white-space:nowrap;">75,000</span>
<span id="t114" style="letter-spacing:0.092px;position:absolute;right:268.29999999999995px;transform-origin:100% 0;top:567.72px;font:normal 13.8px/17px 'Liberation Sans', sans-serif;color:#000;white-space:nowrap;">1.</span>
<span id="t115" style="letter-spacing:0.092px;position:absolute;right:32.299999999999955px;transform-origin:100% 0;top:567.72px;font:normal 13.8px/17px 'Liberation Sans', sans-serif;color:#000;white-space:nowrap;">0.</span>
<div style="position:absolute;left:25px;top:595px;width:1866px;height:1px;background:#d4d4d4"></div>
<span id="t116" style="letter-spacing:-0.920px;position:absolute;left:29.5px;transform-origin:0 0;top:597.72px;font:normal 13.8px/17px 'Liberation Sans', sans-serif;color:#000;white-space:nowrap;">NNCTDXANH</span>
<span id="t117" style="letter-spacing:-0.109px;position:absolute;left:226.8px;transform-origin:0 0;top:597.72px;font:normal 13.8px/17px 'Liberation Sans', sans-serif;color:#000;white-space:nowrap;">Nước ngọt Cần Thơ chai</span>
<span id="t118" style="letter-spacing:-0.117px;position:absolute;left:226.8px;transform-origin:0 0;top:614.72px;font:normal 13.8px/17px 'Liberation Sans', sans-serif;color:#000;white-space:nowrap;">sành-Đậu xanh</span>
<span id="t119" style="letter-spacing:0.000px;position:absolute;left:422.5px;transform-origin:0 0;top:606.72px;font:normal 13.8px/17px 'Liberation Sans', sans-serif;color:#000;white-space:nowrap;">Két</span>
<span id="t120" style="letter-spacing:0.068px;position:absolute;right:985.3px;transform-origin:100% 0;top:606.72px;font:normal 13.8px/17px 'Liberation Sans', sans-serif;color:#000;white-space:nowrap;">71,000</span>
<span id="t121" style="letter-spacing:0.068px;position:absolute;right:725.3px;transform-origin:100% 0;top:606.72px;font:normal 13.8px/17px 'Liberation Sans', sans-serif;color:#000;white-space:nowrap;">64,000</span>
<span id="t122" style="letter-spacing:0.068px;position:absolute;right:465.29999999999995px;transform-origin:100% 0;top:606.72px;font:normal 13.8px/17px 'Liberation Sans', sans-serif;color:#000;white-space:nowrap;">70,000</span>
<span id="t123" style="letter-spacing:0.092px;position:absolute;right:268.29999999999995px;transform-origin:100% 0;top:606.72px;font:normal 13.8px/17px 'Liberation Sans', sans-serif;color:#000;white-space:nowrap;">1.</span>
<span id="t124" style="letter-spacing:0.092px;position:absolute;right:32.299999999999955px;transform-origin:100% 0;top:606.72px;font:normal 13.8px/17px 'Liberation Sans', sans-serif;color:#000;white-space:nowrap;">0.</span>
<div style="position:absolute;left:25px;top:634px;width:1866px;height:1px;background:#d4d4d4"></div>
<span id="t125" style="letter-spacing:-0.934px;position:absolute;left:29.5px;transform-origin:0 0;top:636.72px;font:normal 13.8px/17px 'Liberation Sans', sans-serif;color:#000;white-space:nowrap;">NNPSSDT</span>
<span id="t126" style="letter-spacing:-0.102px;position:absolute;left:226.8px;transform-origin:0 0;top:636.72px;font:normal 13.8px/17px 'Liberation Sans', sans-serif;color:#000;white-space:nowrap;">Nước ngọt Sting dâu chai</span>
<span id="t127" style="letter-spacing:-0.111px;position:absolute;left:226.8px;transform-origin:0 0;top:653.72px;font:normal 13.8px/17px 'Liberation Sans', sans-serif;color:#000;white-space:nowrap;">nhựa 24 x 330ml</span>
<span id="t128" style="letter-spacing:0.293px;position:absolute;left:422.5px;transform-origin:0 0;top:645.72px;font:normal 13.8px/17px 'Liberation Sans', sans-serif;color:#000;white-space:nowrap;">Thùng</span>
<span id="t129" style="letter-spacing:0.067px;position:absolute;right:985.3px;transform-origin:100% 0;top:645.72px;font:normal 13.8px/17px 'Liberation Sans', sans-serif;color:#000;white-space:nowrap;">159,000</span>
<span id="t130" style="letter-spacing:0.123px;position:absolute;right:725.3px;transform-origin:100% 0;top:645.72px;font:normal 13.8px/17px 'Liberation Sans', sans-serif;color:#000;white-space:nowrap;">00</span>
<span id="t131" style="letter-spacing:0.123px;position:absolute;right:465.29999999999995px;transform-origin:100% 0;top:645.72px;font:normal 13.8px/17px 'Liberation Sans', sans-serif;color:#000;white-space:nowrap;">00</span>
<span id="t132" style="letter-spacing:0.092px;position:absolute;right:268.29999999999995px;transform-origin:100% 0;top:645.72px;font:normal 13.8px/17px 'Liberation Sans', sans-serif;color:#000;white-space:nowrap;">1.</span>
<span id="t133" style="letter-spacing:0.092px;position:absolute;right:32.299999999999955px;transform-origin:100% 0;top:645.72px;font:normal 13.8px/17px 'Liberation Sans', sans-serif;color:#000;white-space:nowrap;">0.</span>
<div style="position:absolute;left:25px;top:673px;width:1866px;height:1px;background:#d4d4d4"></div>
<span id="t134" style="letter-spacing:-0.956px;position:absolute;left:29.5px;transform-origin:0 0;top:675.72px;font:normal 13.8px/17px 'Liberation Sans', sans-serif;color:#000;white-space:nowrap;">NNPSMXT</span>
<span id="t135" style="letter-spacing:-0.100px;position:absolute;left:226.8px;transform-origin:0 0;top:675.72px;font:normal 13.8px/17px 'Liberation Sans', sans-serif;color:#000;white-space:nowrap;">Nước ngọt Pepsi Mirinda xị 24</span>
<span id="t136" style="letter-spacing:-0.121px;position:absolute;left:226.8px;transform-origin:0 0;top:692.72px;font:normal 13.8px/17px 'Liberation Sans', sans-serif;color:#000;white-space:nowrap;">x 330ml</span>
<span id="t137" style="letter-spacing:0.293px;position:absolute;left:422.5px;transform-origin:0 0;top:684.72px;font:normal 13.8px/17px 'Liberation Sans', sans-serif;color:#000;white-space:nowrap;">Thùng</span>
<span id="t138" style="letter-spacing:0.067px;position:absolute;right:985.3px;transform-origin:100% 0;top:684.72px;font:normal 13.8px/17px 'Liberation Sans', sans-serif;color:#000;white-space:nowrap;">123,000</span>
<span id="t139" style="letter-spacing:0.123px;position:absolute;right:725.3px;transform-origin:100% 0;top:684.72px;font:normal 13.8px/17px 'Liberation Sans', sans-serif;color:#000;white-space:nowrap;">00</span>
<span id="t140" style="letter-spacing:0.123px;position:absolute;right:465.29999999999995px;transform-origin:100% 0;top:684.72px;font:normal 13.8px/17px 'Liberation Sans', sans-serif;color:#000;white-space:nowrap;">00</span>
<span id="t141" style="letter-spacing:0.092px;position:absolute;right:268.29999999999995px;transform-origin:100% 0;top:684.72px;font:normal 13.8px/17px 'Liberation Sans', sans-serif;color:#000;white-space:nowrap;">1.</span>
<span id="t142" style="letter-spacing:0.092px;position:absolute;right:32.299999999999955px;transform-origin:100% 0;top:684.72px;font:normal 13.8px/17px 'Liberation Sans', sans-serif;color:#000;white-space:nowrap;">0.</span>
<div style="position:absolute;left:25px;top:712px;width:1866px;height:1px;background:#d4d4d4"></div>
<span id="t143" style="letter-spacing:-1.017px;position:absolute;left:29.5px;transform-origin:0 0;top:714.72px;font:normal 13.8px/17px 'Liberation Sans', sans-serif;color:#000;white-space:nowrap;">NNRDCN</span>
<span id="t144" style="letter-spacing:-0.106px;position:absolute;left:226.8px;transform-origin:0 0;top:714.72px;font:normal 13.8px/17px 'Liberation Sans', sans-serif;color:#000;white-space:nowrap;">Nước tăng lực Rồng Đỏ chai</span>
<span id="t145" style="letter-spacing:-0.111px;position:absolute;left:226.8px;transform-origin:0 0;top:731.72px;font:normal 13.8px/17px 'Liberation Sans', sans-serif;color:#000;white-space:nowrap;">nhựa 24 x 330ml</span>
<span id="t146" style="letter-spacing:0.293px;position:absolute;left:422.5px;transform-origin:0 0;top:723.72px;font:normal 13.8px/17px 'Liberation Sans', sans-serif;color:#000;white-space:nowrap;">Thùng</span>
<span id="t147" style="letter-spacing:0.068px;position:absolute;right:985.3px;transform-origin:100% 0;top:723.72px;font:normal 13.8px/17px 'Liberation Sans', sans-serif;color:#000;white-space:nowrap;">96,000</span>
<span id="t148" style="letter-spacing:0.123px;position:absolute;right:725.3px;transform-origin:100% 0;top:723.72px;font:normal 13.8px/17px 'Liberation Sans', sans-serif;color:#000;white-space:nowrap;">00</span>
<span id="t149" style="letter-spacing:0.123px;position:absolute;right:465.29999999999995px;transform-origin:100% 0;top:723.72px;font:normal 13.8px/17px 'Liberation Sans', sans-serif;color:#000;white-space:nowrap;">00</span>
<span id="t150" style="letter-spacing:0.092px;position:absolute;right:268.29999999999995px;transform-origin:100% 0;top:723.72px;font:normal 13.8px/17px 'Liberation Sans', sans-serif;color:#000;white-space:nowrap;">1.</span>
<span id="t151" style="letter-spacing:0.092px;position:absolute;right:32.299999999999955px;transform-origin:100% 0;top:723.72px;font:normal 13.8px/17px 'Liberation Sans', sans-serif;color:#000;white-space:nowrap;">0.</span>
<div style="position:absolute;left:25px;top:751px;width:1866px;height:1px;background:#d4d4d4"></div>
<span id="t152" style="letter-spacing:-0.354px;position:absolute;left:29.5px;transform-origin:0 0;top:753.72px;font:normal 13.8px/17px 'Liberation Sans', sans-serif;color:#000;white-space:nowrap;">NSNOC500</span>
<span id="t153" style="letter-spacing:-0.110px;position:absolute;left:226.8px;transform-origin:0 0;top:753.72px;font:normal 13.8px/17px 'Liberation Sans', sans-serif;color:#000;white-space:nowrap;">Nước suối Number One chai</span>
<span id="t154" style="letter-spacing:-0.111px;position:absolute;left:226.8px;transform-origin:0 0;top:770.72px;font:normal 13.8px/17px 'Liberation Sans', sans-serif;color:#000;white-space:nowrap;">nhựa 24 x 500ml</span>
<span id="t155" style="letter-spacing:0.293px;position:absolute;left:422.5px;transform-origin:0 0;top:762.72px;font:normal 13.8px/17px 'Liberation Sans', sans-serif;color:#000;white-space:nowrap;">Thùng</span>
<span id="t156" style="letter-spacing:0.123px;position:absolute;right:985.3px;transform-origin:100% 0;top:762.72px;font:normal 13.8px/17px 'Liberation Sans', sans-serif;color:#000;white-space:nowrap;">00</span>
<span id="t157" style="letter-spacing:0.123px;position:absolute;right:725.3px;transform-origin:100% 0;top:762.72px;font:normal 13.8px/17px 'Liberation Sans', sans-serif;color:#000;white-space:nowrap;">00</span>
<span id="t158" style="letter-spacing:0.123px;position:absolute;right:465.29999999999995px;transform-origin:100% 0;top:762.72px;font:normal 13.8px/17px 'Liberation Sans', sans-serif;color:#000;white-space:nowrap;">00</span>
<span id="t159" style="letter-spacing:0.092px;position:absolute;right:268.29999999999995px;transform-origin:100% 0;top:762.72px;font:normal 13.8px/17px 'Liberation Sans', sans-serif;color:#000;white-space:nowrap;">1.</span>
<span id="t160" style="letter-spacing:0.092px;position:absolute;right:32.299999999999955px;transform-origin:100% 0;top:762.72px;font:normal 13.8px/17px 'Liberation Sans', sans-serif;color:#000;white-space:nowrap;">0.</span>
<div style="position:absolute;left:25px;top:790px;width:1866px;height:1px;background:#d4d4d4"></div>
<span id="t161" style="letter-spacing:-0.905px;position:absolute;left:29.5px;transform-origin:0 0;top:792.72px;font:normal 13.8px/17px 'Liberation Sans', sans-serif;color:#000;white-space:nowrap;">NNTHPTXODC</span>
<span id="t162" style="letter-spacing:-0.102px;position:absolute;left:226.8px;transform-origin:0 0;top:792.72px;font:normal 13.8px/17px 'Liberation Sans', sans-serif;color:#000;white-space:nowrap;">Trà xanh 0 độ 24 x 500ml</span>
<span id="t163" style="letter-spacing:0.293px;position:absolute;left:422.5px;transform-origin:0 0;top:794.72px;font:normal 13.8px/17px 'Liberation Sans', sans-serif;color:#000;white-space:nowrap;">Thùng</span>
<span id="t164" style="letter-spacing:0.067px;position:absolute;right:985.3px;transform-origin:100% 0;top:794.72px;font:normal 13.8px/17px 'Liberation Sans', sans-serif;color:#000;white-space:nowrap;">163,000</span>
<span id="t165" style="letter-spacing:0.123px;position:absolute;right:725.3px;transform-origin:100% 0;top:794.72px;font:normal 13.8px/17px 'Liberation Sans', sans-serif;color:#000;white-space:nowrap;">00</span>
<span id="t166" style="letter-spacing:0.123px;position:absolute;right:465.29999999999995px;transform-origin:100% 0;top:794.72px;font:normal 13.8px/17px 'Liberation Sans', sans-serif;color:#000;white-space:nowrap;">00</span>
<span id="t167" style="letter-spacing:0.092px;position:absolute;right:268.29999999999995px;transform-origin:100% 0;top:794.72px;font:normal 13.8px/17px 'Liberation Sans', sans-serif;color:#000;white-space:nowrap;">1.</span>
<span id="t168" style="letter-spacing:0.092px;position:absolute;right:32.299999999999955px;transform-origin:100% 0;top:794.72px;font:normal 13.8px/17px 'Liberation Sans', sans-serif;color:#000;white-space:nowrap;">0.</span>
<div style="position:absolute;left:25px;top:816px;width:1866px;height:1px;background:#d4d4d4"></div>
<span id="t169" style="letter-spacing:-0.708px;position:absolute;left:29.5px;transform-origin:0 0;top:818.72px;font:normal 13.8px/17px 'Liberation Sans', sans-serif;color:#000;white-space:nowrap;">NNPS7UPL</span>
<span id="t170" style="letter-spacing:-0.101px;position:absolute;left:226.8px;transform-origin:0 0;top:818.72px;font:normal 13.8px/17px 'Liberation Sans', sans-serif;color:#000;white-space:nowrap;">Nước ngọt Pepsi 7 Up lon 24 x</span>
<span id="t171" style="letter-spacing:-0.141px;position:absolute;left:226.8px;transform-origin:0 0;top:835.72px;font:normal 13.8px/17px 'Liberation Sans', sans-serif;color:#000;white-space:nowrap;">330ml</span>
<span id="t172" style="letter-spacing:0.293px;position:absolute;left:422.5px;transform-origin:0 0;top:827.72px;font:normal 13.8px/17px 'Liberation Sans', sans-serif;color:#000;white-space:nowrap;">Thùng</span>
<span id="t173" style="letter-spacing:0.067px;position:absolute;right:985.3px;transform-origin:100% 0;top:827.72px;font:normal 13.8px/17px 'Liberation Sans', sans-serif;color:#000;white-space:nowrap;">174,000</span>
<span id="t174" style="letter-spacing:0.123px;position:absolute;right:725.3px;transform-origin:100% 0;top:827.72px;font:normal 13.8px/17px 'Liberation Sans', sans-serif;color:#000;white-space:nowrap;">00</span>
<span id="t175" style="letter-spacing:0.123px;position:absolute;right:465.29999999999995px;transform-origin:100% 0;top:827.72px;font:normal 13.8px/17px 'Liberation Sans', sans-serif;color:#000;white-space:nowrap;">00</span>
<span id="t176" style="letter-spacing:0.092px;position:absolute;right:268.29999999999995px;transform-origin:100% 0;top:827.72px;font:normal 13.8px/17px 'Liberation Sans', sans-serif;color:#000;white-space:nowrap;">1.</span>
<span id="t177" style="letter-spacing:0.092px;position:absolute;right:32.299999999999955px;transform-origin:100% 0;top:827.72px;font:normal 13.8px/17px 'Liberation Sans', sans-serif;color:#000;white-space:nowrap;">0.</span>
<div style="position:absolute;left:25px;top:855px;width:1866px;height:1px;background:#d4d4d4"></div>
<span id="t178" style="letter-spacing:-0.903px;position:absolute;left:29.5px;transform-origin:0 0;top:857.72px;font:normal 13.8px/17px 'Liberation Sans', sans-serif;color:#000;white-space:nowrap;">NNTHPDTT</span>
<span id="t179" style="letter-spacing:-0.101px;position:absolute;left:226.8px;transform-origin:0 0;top:857.72px;font:normal 13.8px/17px 'Liberation Sans', sans-serif;color:#000;white-space:nowrap;">Trà thảo mộc Dr. Thanh 24 x</span>
<span id="t180" style="letter-spacing:-0.141px;position:absolute;left:226.8px;transform-origin:0 0;top:874.72px;font:normal 13.8px/17px 'Liberation Sans', sans-serif;color:#000;white-space:nowrap;">330ml</span>
<span id="t181" style="letter-spacing:0.293px;position:absolute;left:422.5px;transform-origin:0 0;top:866.72px;font:normal 13.8px/17px 'Liberation Sans', sans-serif;color:#000;white-space:nowrap;">Thùng</span>
<span id="t182" style="letter-spacing:0.067px;position:absolute;right:985.3px;transform-origin:100% 0;top:866.72px;font:normal 13.8px/17px 'Liberation Sans', sans-serif;color:#000;white-space:nowrap;">188,000</span>
<span id="t183" style="letter-spacing:0.123px;position:absolute;right:725.3px;transform-origin:100% 0;top:866.72px;font:normal 13.8px/17px 'Liberation Sans', sans-serif;color:#000;white-space:nowrap;">00</span>
<span id="t184" style="letter-spacing:0.123px;position:absolute;right:465.29999999999995px;transform-origin:100% 0;top:866.72px;font:normal 13.8px/17px 'Liberation Sans', sans-serif;color:#000;white-space:nowrap;">00</span>
<span id="t185" style="letter-spacing:0.092px;position:absolute;right:268.29999999999995px;transform-origin:100% 0;top:866.72px;font:normal 13.8px/17px 'Liberation Sans', sans-serif;color:#000;white-space:nowrap;">1.</span>
<span id="t186" style="letter-spacing:0.092px;position:absolute;right:32.299999999999955px;transform-origin:100% 0;top:866.72px;font:normal 13.8px/17px 'Liberation Sans', sans-serif;color:#000;white-space:nowrap;">0.</span>
<div style="position:absolute;left:25px;top:894px;width:1866px;height:1px;background:#d4d4d4"></div>
<span id="t187" style="letter-spacing:-0.329px;position:absolute;left:29.5px;transform-origin:0 0;top:896.72px;font:normal 13.8px/17px 'Liberation Sans', sans-serif;color:#000;white-space:nowrap;">NNPSOLT330</span>
<span id="t188" style="letter-spacing:-0.107px;position:absolute;left:226.8px;transform-origin:0 0;top:896.72px;font:normal 13.8px/17px 'Liberation Sans', sans-serif;color:#000;white-space:nowrap;">Nước ngọt Pepsi Ô Long 24 X</span>
<span id="t189" style="letter-spacing:-0.141px;position:absolute;left:226.8px;transform-origin:0 0;top:913.72px;font:normal 13.8px/17px 'Liberation Sans', sans-serif;color:#000;white-space:nowrap;">330ml</span>
<span id="t190" style="letter-spacing:0.293px;position:absolute;left:422.5px;transform-origin:0 0;top:905.72px;font:normal 13.8px/17px 'Liberation Sans', sans-serif;color:#000;white-space:nowrap;">Thùng</span>
<span id="t191" style="letter-spacing:0.067px;position:absolute;right:985.3px;transform-origin:100% 0;top:905.72px;font:normal 13.8px/17px 'Liberation Sans', sans-serif;color:#000;white-space:nowrap;">100,000</span>
<span id="t192" style="letter-spacing:0.123px;position:absolute;right:725.3px;transform-origin:100% 0;top:905.72px;font:normal 13.8px/17px 'Liberation Sans', sans-serif;color:#000;white-space:nowrap;">00</span>
<span id="t193" style="letter-spacing:0.123px;position:absolute;right:465.29999999999995px;transform-origin:100% 0;top:905.72px;font:normal 13.8px/17px 'Liberation Sans', sans-serif;color:#000;white-space:nowrap;">00</span>
<span id="t194" style="letter-spacing:0.092px;position:absolute;right:268.29999999999995px;transform-origin:100% 0;top:905.72px;font:normal 13.8px/17px 'Liberation Sans', sans-serif;color:#000;white-space:nowrap;">1.</span>
<span id="t195" style="letter-spacing:0.092px;position:absolute;right:32.299999999999955px;transform-origin:100% 0;top:905.72px;font:normal 13.8px/17px 'Liberation Sans', sans-serif;color:#000;white-space:nowrap;">0.</span>
<div style="position:absolute;left:25px;top:933px;width:1866px;height:1px;background:#d4d4d4"></div>
<span id="t196" style="letter-spacing:-0.329px;position:absolute;left:29.5px;transform-origin:0 0;top:935.72px;font:normal 13.8px/17px 'Liberation Sans', sans-serif;color:#000;white-space:nowrap;">NNPSOLT500</span>
<span id="t197" style="letter-spacing:-0.107px;position:absolute;left:226.8px;transform-origin:0 0;top:935.72px;font:normal 13.8px/17px 'Liberation Sans', sans-serif;color:#000;white-space:nowrap;">Nước ngọt Pepsi Ô Long 24 X</span>
<span id="t198" style="letter-spacing:-0.136px;position:absolute;left:226.8px;transform-origin:0 0;top:952.72px;font:normal 13.8px/17px 'Liberation Sans', sans-serif;color:#000;white-space:nowrap;">5000ml</span>
<span id="t199" style="letter-spacing:0.293px;position:absolute;left:422.5px;transform-origin:0 0;top:944.72px;font:normal 13.8px/17px 'Liberation Sans', sans-serif;color:#000;white-space:nowrap;">Thùng</span>
<span id="t200" style="letter-spacing:0.067px;position:absolute;right:985.3px;transform-origin:100% 0;top:944.72px;font:normal 13.8px/17px 'Liberation Sans', sans-serif;color:#000;white-space:nowrap;">154,000</span>
<span id="t201" style="letter-spacing:0.123px;position:absolute;right:725.3px;transform-origin:100% 0;top:944.72px;font:normal 13.8px/17px 'Liberation Sans', sans-serif;color:#000;white-space:nowrap;">00</span>
<span id="t202" style="letter-spacing:0.123px;position:absolute;right:465.29999999999995px;transform-origin:100% 0;top:944.72px;font:normal 13.8px/17px 'Liberation Sans', sans-serif;color:#000;white-space:nowrap;">00</span>
<span id="t203" style="letter-spacing:0.092px;position:absolute;right:268.29999999999995px;transform-origin:100% 0;top:944.72px;font:normal 13.8px/17px 'Liberation Sans', sans-serif;color:#000;white-space:nowrap;">1.</span>
<span id="t204" style="letter-spacing:0.092px;position:absolute;right:32.299999999999955px;transform-origin:100% 0;top:944.72px;font:normal 13.8px/17px 'Liberation Sans', sans-serif;color:#000;white-space:nowrap;">0.</span>
<div style="position:absolute;left:9px;top:968px;width:1899px;height:1px;background:#a0a0a0"></div>
<div style="position:absolute;left:24px;top:296px;width:1px;height:673px;background:#a0a0a0"></div>
<div style="position:absolute;left:221px;top:297px;width:1px;height:671px;background:#d4d4d4"></div>
<div style="position:absolute;left:418px;top:297px;width:1px;height:671px;background:#d4d4d4"></div>
<div style="position:absolute;left:678px;top:297px;width:1px;height:671px;background:#d4d4d4"></div>
<div style="position:absolute;left:938px;top:297px;width:1px;height:671px;background:#d4d4d4"></div>
<div style="position:absolute;left:1198px;top:297px;width:1px;height:671px;background:#d4d4d4"></div>
<div style="position:absolute;left:1458px;top:297px;width:1px;height:671px;background:#d4d4d4"></div>
<div style="position:absolute;left:1655px;top:297px;width:1px;height:671px;background:#d4d4d4"></div>
<div style="position:absolute;left:1891px;top:296px;width:1px;height:672px;background:repeating-linear-gradient(180deg,#c0c0c0 0 3px,transparent 3px 6px)"></div>
<svg style="position:absolute;left:14px;top:305px" width="6" height="9"><path d="M1 0.5 L5 4.5 L1 8.5 Z" fill="#000"/></svg>
<div style="position:absolute;left:1891px;top:287px;width:16px;height:417px;background:transparent"></div>
<div style="position:absolute;left:1891px;top:287px;width:16px;height:418px;border:1px solid #a8a8a8;box-sizing:border-box;background:transparent"></div>
<svg style="position:absolute;left:1892px;top:288px" width="14" height="416" shape-rendering="crispEdges"><g transform="translate(-1892 -288)"><rect x="1892" y="288" width="14" height="416" fill="none"/><rect x="1892" y="288" width="14" height="416" fill="url(#hp)"/></g></svg>
<svg style="position:absolute;left:1895px;top:957px" width="9" height="6"><path d="M0.5 1 L8.5 1 L4.5 5 Z" fill="#000"/></svg>
<svg style="position:absolute;left:1206px;top:414px" width="14" height="21"><path d="M1.5 1.5 L1.5 17.5 L5.3 13.6 L8 19.3 L10.4 18.2 L7.8 12.5 L12.8 12.5 Z" fill="#fff" stroke="#1a1a22" stroke-width="1.3" stroke-linejoin="round"/></svg>
<div style="position:absolute;left:223px;top:971px;width:195px;height:28px;border:1px dashed #c8c8c8;box-sizing:border-box;background:#fff"></div>
<span id="t205" style="position:absolute;right:1507px;transform-origin:100% 0;transform:scaleX(0.9915);top:977.22px;font:bold 13.8px/17px 'Liberation Sans', sans-serif;color:#ff0000;white-space:nowrap;">Tổng số = 26</span>
<div style="position:absolute;left:0px;top:1012px;width:1920px;height:28px;background:#fff"></div>
<div style="position:absolute;left:0px;top:1013px;width:1920px;height:1px;background:repeating-linear-gradient(90deg,#b4b4b4 0 4px,transparent 4px 6px)"></div>
<span id="t206" style="position:absolute;left:8px;transform-origin:0 0;transform:scaleX(1.0622);top:1021.19px;font:bold 11px/14px 'Liberation Sans', sans-serif;color:#000;white-space:nowrap;">Chào mừng: Administrator đến với phần mềm MekongSoft</span>
<div style="position:absolute;left:348px;top:1022px;width:1px;height:12px;background:#b8c8d8"></div>
<span id="t207" style="position:absolute;left:363px;transform-origin:0 0;transform:scaleX(1.0573);top:1021.19px;font:bold 11px/14px 'Liberation Sans', sans-serif;color:#000;white-space:nowrap;">Version: 4.5.0</span>
<div style="position:absolute;left:452px;top:1022px;width:1px;height:12px;background:#b8c8d8"></div>
<span id="t208" style="position:absolute;left:466px;transform-origin:0 0;transform:scaleX(1.1048);top:1021.19px;font:bold 11px/14px 'Liberation Sans', sans-serif;color:#ff0000;white-space:nowrap;">Ngày: 27/10/2023 9:36:30 SA</span>
<div style="position:absolute;left:1607px;top:1014px;width:1px;height:27px;background:repeating-linear-gradient(180deg,#a0a0a0 0 3px,transparent 3px 6px)"></div>
<span id="t209" style="position:absolute;left:1618px;transform-origin:0 0;transform:scaleX(1.0412);top:1021.19px;font:bold 11px/14px 'Liberation Sans', sans-serif;color:#000;white-space:nowrap;">@2023 MEKONGSOFT. Thông tin hỗ trợ: 0901 000 508</span>
<div style="position:absolute;left:0px;top:1040px;width:1920px;height:1px;background:#c8d8e4"></div>
<div style="position:absolute;left:736px;top:1040px;width:48px;height:1px;background:#f0a868"></div>
</div></body></html>
